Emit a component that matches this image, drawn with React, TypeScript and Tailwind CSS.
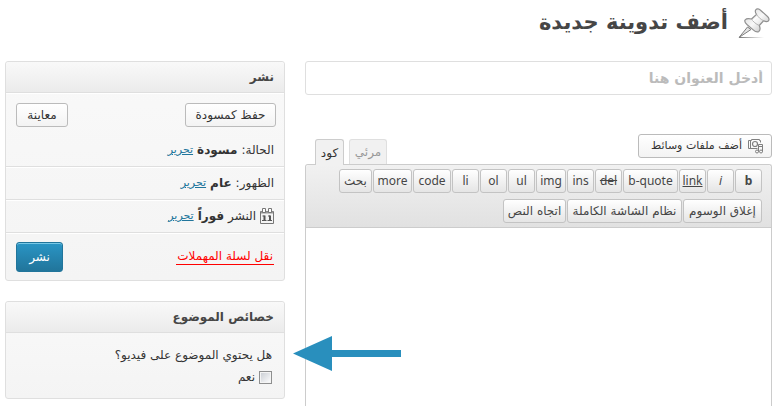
import type { ReactNode } from "react"
import clsx from "clsx"

const quickTags = [
  { label: "b", width: "w-[27px]", style: "font-bold" },
  { label: "i", width: "w-[27px]", style: "italic" },
  { label: "link", width: "w-[27px]", style: "underline" },
  { label: "b-quote", width: "w-[55px]", style: "" },
  { label: "del", width: "w-[27px]", style: "line-through" },
  { label: "ins", width: "w-[27px]", style: "" },
  { label: "img", width: "w-[30px]", style: "" },
  { label: "ul", width: "w-[27px]", style: "" },
  { label: "ol", width: "w-[27px]", style: "" },
  { label: "li", width: "w-[27px]", style: "" },
  { label: "code", width: "w-[38px]", style: "" },
  { label: "more", width: "w-[39px]", style: "" },
  { label: "بحث", width: "w-[33px]", style: "" },
]

const editorTags = [
  { label: "إغلاق الوسوم", width: "w-[79px]" },
  { label: "نظام الشاشة الكاملة", width: "w-[115px]" },
  { label: "اتجاه النص", width: "w-[63px]" },
]

const statusRows = [
  { label: "الحالة:", value: "مسودة", icon: false },
  { label: "الظهور:", value: "عام", icon: false },
  { label: "النشر", value: "فوراً", icon: true },
]

const PinIcon = () => (
  <svg width="32" height="32" viewBox="0 0 32 32" fill="none" aria-hidden="true">
    <defs>
      <linearGradient id="pin" x1="0" y1="0" x2="1" y2="1">
        <stop offset="0" stopColor="#d8d8d8" />
        <stop offset=".5" stopColor="#f8f8f8" />
        <stop offset="1" stopColor="#b5b5b5" />
      </linearGradient>
      <linearGradient id="pinShadow" gradientUnits="userSpaceOnUse" x1="1" y1="0" x2="26" y2="0">
        <stop offset="0" stopColor="#777" />
        <stop offset="1" stopColor="#fff" />
      </linearGradient>
    </defs>
    <path d="M1 29.500h25" stroke="url(#pinShadow)" />
    <path d="M9.500 19 1.200 29.300 13 21.500z" fill="#e4e4e4" stroke="#808080" />
    {/* base, neck and cap of the pin */}
    <path d="M7.200 11.800c1.300-1.500 4-1.400 6.300-.8l5-4.600c-1.200-1.700-1.600-3.500-.6-4.700 1-1.300 3-.9 4.600.5l7 6.300c1.600 1.500 2 3.500.8 4.500-1.200 1-3 .7-4.700-.2l-4.300 4.700c1 2.500.8 5-.5 6-1.500 1-3.600.2-5.600-1.600l-6-5.200c-2.200-2-3-3.700-2-4.900z" fill="url(#pin)" stroke="#909090" strokeWidth="1.200" />
    <path d="M18.500 6.400c1.300 2.300 4 4.900 7.100 6.400M13.500 11c1.500 2.500 4.600 5.300 7.800 6.500" stroke="#b4b4b4" />
    <path d="M19.500 8.800l-4.500 4" stroke="#fff" strokeWidth="1.500" />
  </svg>
)

const MediaIcon = () => (
  <svg width="16" height="16" viewBox="0 0 16 16" fill="none" stroke="#808080" aria-hidden="true">
    <path d="M9.500 10.500h-9v-8h3v-1h8v1h1v2" />
    <path d="M2.500 2.500v8M1 2.500h2" />
    <circle cx="7" cy="6" r="2.500" strokeWidth="1.200" />
    <path d="M10.500 13.500v-7h4v7M10.500 8.500h4" />
    <circle cx="9" cy="13.500" r="1.500" />
    <circle cx="13" cy="13.500" r="1.500" />
  </svg>
)

const CalendarIcon = () => (
  <svg width="14" height="16" viewBox="0 0 14 16" fill="none" stroke="#777" aria-hidden="true">
    <path d="M.5 3.500h13v12H.5z" fill="#f4f4f4" />
    <path d="M1 4.500h12" stroke="#999" strokeWidth="2" />
    <path d="M2.500.5h3v4h-3zM8.500.5h3v4h-3z" fill="#fff" />
    <path d="M2.500 8h2M2 12.500h4.500M8 8h2M7.500 12.500H12" stroke="#555" />
    <path d="M4.500 7.500V13M10 7.500V13" stroke="#555" strokeWidth="2" />
  </svg>
)

const ArrowIcon = () => (
  <svg width="108" height="36" viewBox="0 0 108 36" aria-hidden="true">
    <path d="M0 17.500 39 0v14h69v7H39v14z" fill="#298fbd" />
  </svg>
)

const Button = ({ children, className }: { children: ReactNode; className?: string }) => (
  <button
    type="button"
    className={clsx(
      "h-6 rounded-[3px] border border-[#bbb] bg-linear-to-b from-white to-[#f3f3f3] whitespace-nowrap text-[#333]",
      className
    )}
  >
    {children}
  </button>
)

const TagButton = ({ label, width, style }: { label: string; width: string; style?: string }) => (
  <button
    type="button"
    className={clsx(
      "flex h-6 items-center justify-center rounded-[3px] border border-[#c3c3c3] bg-linear-to-b from-white to-[#e5e5e5] whitespace-nowrap text-[#464646]",
      width
    )}
  >
    <span className={style}>{label}</span>
  </button>
)

const Box = ({ title, children }: { title: string; children: ReactNode }) => (
  <section className="relative rounded-[3px] border border-[#dfdfdf] bg-linear-to-b from-[#f9f9f9] to-[#f4f4f4]">
    <h2 className="h-[31px] rounded-t-[3px] border-b border-[#dfdfdf] bg-linear-to-b from-[#f9f9f9] to-[#ebebeb] px-2.5 text-[12px] leading-[30px] font-bold text-[#464646]">
      {title}
    </h2>
    {children}
  </section>
)

const PublishBox = () => (
  <Box title="نشر">
    <div className="flex justify-between border-t border-white px-2 pt-[9px] pb-[7px] pl-2.5">
      <Button className="w-[91px]">حفظ كمسودة</Button>
      <Button className="w-[52px]">معاينة</Button>
    </div>
    {statusRows.map((row) => (
      <div
        key={row.label}
        className="flex h-[33px] items-center gap-1 border-b border-[#dfdfdf] px-2.5 shadow-[0_1px_0_#fff]"
      >
        {row.icon && <CalendarIcon />}
        <span>{row.label}</span>
        <b>{row.value}</b>
        <a href="#" className="text-[11px] text-[#21759b] underline">تحرير</a>
      </div>
    ))}
    <div className="flex h-[47px] items-center justify-between px-2.5">
      <a href="#" className="border-b border-[#f00] px-px leading-4 text-[#f00]">نقل لسلة المهملات</a>
      <button
        type="button"
        className="h-[30px] w-[47px] rounded-[3px] border border-[#21759b] bg-linear-to-b from-[#2a95c5] to-[#21759b] text-white shadow-[inset_0_1px_0_#78c8e6]"
      >
        نشر
      </button>
    </div>
  </Box>
)

const TopicBox = () => (
  <Box title="خصائص الموضوع">
    <div className="px-3 pt-[11px] pb-2.5">
      <p className="h-[22px] leading-[22px]">هل يحتوي الموضوع على فيديو؟</p>
      <label className="flex h-[22px] items-center gap-1">
        <input
          type="checkbox"
          className="size-[13px] appearance-none border border-[#8e8f8f] bg-linear-to-br from-[#c8ccd2] to-white shadow-[inset_0_0_0_1px_#f4f4f4]"
        />
        نعم
      </label>
    </div>
    {/* points at the box from the editor side */}
    <div className="absolute top-[34px] left-full ml-[9px]">
      <ArrowIcon />
    </div>
  </Box>
)

const Editor = () => (
  <div className="flex flex-1 flex-col">
    <div className="flex items-end justify-between">
      <Button className="mb-1.5 flex w-[134px] items-center gap-1.5 px-[7px] text-[11px]">
        <MediaIcon />
        أضف ملفات وسائط
      </Button>
      <div className="flex gap-[5px] pl-2.5">
        <button type="button" className="h-[25px] w-[38px] rounded-t-[3px] border border-b-0 border-[#dfdfdf] bg-[#f1f1f1] text-[#999]">
          مرئي
        </button>
        <button type="button" className="relative -mb-px h-[26px] w-[29px] rounded-t-[3px] border border-b-0 border-[#ccc] bg-[#f1f1f1] text-[#333]">
          كود
        </button>
      </div>
    </div>
    <div className="flex flex-1 flex-col rounded-t-[3px] border border-b-0 border-[#ccc]">
      <div className="flex flex-col gap-1.5 rounded-t-[3px] border-b border-[#ccc] bg-linear-to-b from-[#f1f1f1] to-[#e1e1e1] py-1 pr-[9px]">
        <div className="flex gap-px font-['Noto_Sans','DejaVu_Sans',sans-serif]">
          {quickTags.map((tag) => (
            <TagButton key={tag.label} {...tag} />
          ))}
        </div>
        <div className="flex gap-px">
          {editorTags.map((tag) => (
            <TagButton key={tag.label} {...tag} />
          ))}
        </div>
      </div>
      <textarea aria-label="المحتوى" className="w-full flex-1 resize-none p-2.5 outline-none" />
    </div>
  </div>
)

const App = () => {
  return (
    <div
      dir="rtl"
      className="flex min-h-screen flex-col bg-white px-[5px] font-['DejaVu_Sans',sans-serif] text-[12px] text-[#333]"
    >
      <header className="flex h-[61px] items-start gap-2.5 pt-2 pr-0.5">
        <PinIcon />
        <h1 className="text-[21px] leading-7 font-bold text-[#464646]">أضف تدوينة جديدة</h1>
      </header>
      <div className="flex flex-1 items-stretch gap-5">
        <main className="flex min-w-0 flex-1 flex-col">
          <input
            type="text"
            aria-label="العنوان"
            placeholder="أدخل العنوان هنا"
            className="mb-[39px] h-[34px] w-full rounded-[3px] border border-[#dfdfdf] px-2 text-[14px] font-bold outline-none placeholder:text-[#bbb]"
          />
          <Editor />
        </main>
        <aside className="flex w-[280px] shrink-0 flex-col gap-5">
          <PublishBox />
          <TopicBox />
        </aside>
      </div>
    </div>
  )
}

export default App
